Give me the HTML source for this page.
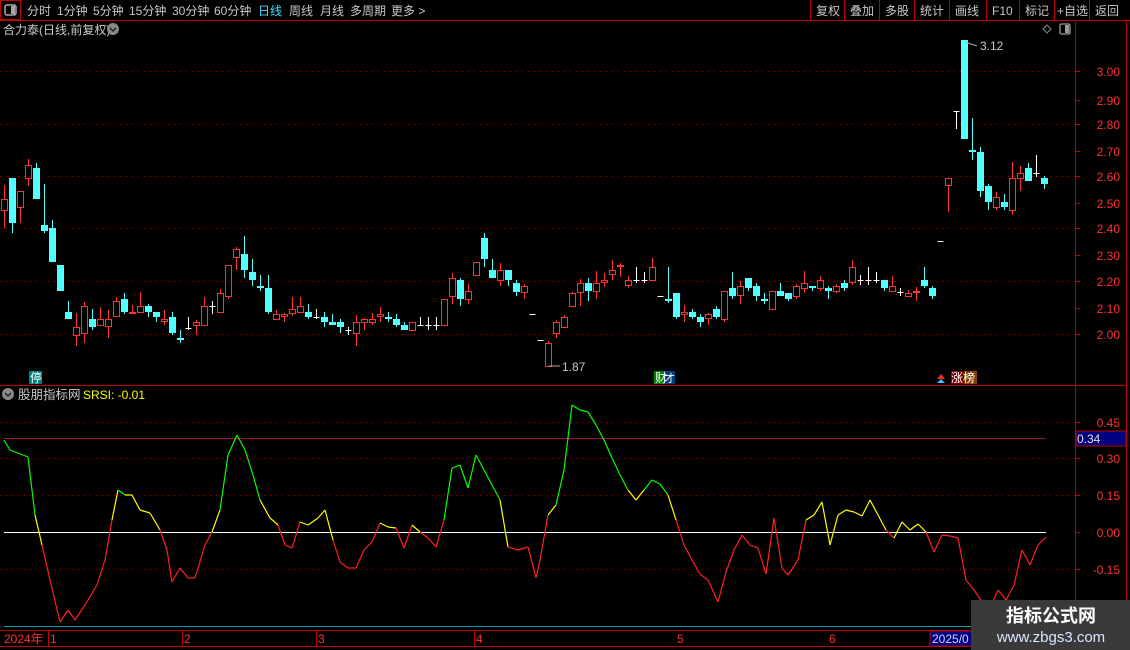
<!DOCTYPE html>
<html><head><meta charset="utf-8"><style>
html,body{margin:0;padding:0;background:#000;width:1130px;height:650px;overflow:hidden;font-family:"Liberation Sans","Noto Sans CJK SC",sans-serif;}
</style></head><body>
<svg id="s" width="1130" height="650" style="position:absolute;left:0;top:0" xmlns="http://www.w3.org/2000/svg" font-family="Liberation Sans, Noto Sans CJK SC, sans-serif">
<rect x="0.5" y="0.5" width="20" height="19" fill="none" stroke="#c00000"/>
<rect x="5" y="5" width="11" height="10" rx="2" fill="none" stroke="#aaa" stroke-width="1.5"/>
<rect x="11" y="6" width="4" height="8" fill="#aaa"/>
<line x1="0" y1="20.5" x2="1130" y2="20.5" stroke="#c00000"/>
<g fill="#c8c8c8" font-size="12">
<text x="27" y="15">分时</text><text x="57" y="15">1分钟</text><text x="93" y="15">5分钟</text><text x="129" y="15">15分钟</text><text x="172" y="15">30分钟</text><text x="214" y="15">60分钟</text>
<text x="258" y="15" fill="#40e0ff">日线</text><text x="289" y="15">周线</text><text x="320" y="15">月线</text><text x="350" y="15">多周期</text><text x="391" y="15">更多 &gt;</text>
<text x="816" y="15">复权</text><text x="850" y="15">叠加</text><text x="885" y="15">多股</text><text x="920" y="15">统计</text><text x="955" y="15">画线</text><text x="992" y="15">F10</text><text x="1025" y="15">标记</text><text x="1057" y="15">+自选</text><text x="1095" y="15">返回</text>
</g>
<g stroke="#c00000"><line x1="810.5" y1="0" x2="810.5" y2="20"/><line x1="844.5" y1="0" x2="844.5" y2="20"/><line x1="879.5" y1="0" x2="879.5" y2="20"/><line x1="914.5" y1="0" x2="914.5" y2="20"/><line x1="949.5" y1="0" x2="949.5" y2="20"/><line x1="986.5" y1="0" x2="986.5" y2="20"/><line x1="1019.5" y1="0" x2="1019.5" y2="20"/><line x1="1054.5" y1="0" x2="1054.5" y2="20"/><line x1="1089.5" y1="0" x2="1089.5" y2="20"/></g>
<text x="3" y="34" fill="#c8c8c8" font-size="12">合力泰(日线,前复权)</text>
<circle cx="113" cy="29" r="6" fill="#888"/><path d="M110 28 L113 31 L116 28" stroke="#222" stroke-width="1.5" fill="none"/>
<path d="M1047 25 L1051 29 L1047 33 L1043 29 Z" fill="none" stroke="#888"/>
<rect x="1060" y="24" width="10" height="10" rx="1.5" fill="none" stroke="#999" stroke-width="1.3"/><rect x="1065" y="25" width="4" height="8" fill="#999"/>
<line x1="1075.5" y1="20" x2="1075.5" y2="646" stroke="#c00000"/>
<line x1="1126.5" y1="20" x2="1126.5" y2="646" stroke="#c00000"/>
<line x1="0" y1="385.5" x2="1126" y2="385.5" stroke="#c00000"/>
<g id="grid"></g>
<g id="cand"></g>
<g id="ind"></g>
<g fill="#ff3030" font-size="12" text-anchor="end">
<text x="1120" y="76">3.00</text><text x="1120" y="105">2.90</text><text x="1120" y="129">2.80</text><text x="1120" y="156">2.70</text><text x="1120" y="181">2.60</text><text x="1120" y="208">2.50</text><text x="1120" y="233">2.40</text><text x="1120" y="260">2.30</text><text x="1120" y="286">2.20</text><text x="1120" y="313">2.10</text><text x="1120" y="339">2.00</text>
<text x="1120" y="427">0.45</text><text x="1120" y="463">0.30</text><text x="1120" y="500">0.15</text><text x="1120" y="537">0.00</text><text x="1120" y="574">-0.15</text>
</g>
<rect x="1076" y="431" width="50" height="15" fill="#000080" stroke="#c00000"/>
<text x="1077" y="443" fill="#e0e0e0" font-size="12">0.34</text>
<text x="980" y="50" fill="#c8c8c8" font-size="12">3.12</text><path d="M965 42 L977 46" stroke="#aaa"/>
<text x="562" y="371" fill="#c8c8c8" font-size="12">1.87</text><path d="M549 366 L560 366" stroke="#aaa"/>
<rect x="29" y="371" width="13" height="13" fill="#008080"/><text x="30" y="382" fill="#fff" font-size="12">停</text>
<rect x="654" y="371" width="10" height="13" fill="#008000"/><rect x="664" y="371" width="11" height="13" fill="#004080"/><text x="655" y="382" fill="#fff" font-size="12">财</text><text x="664" y="382" fill="#fff" font-size="11">才</text>
<path d="M937 379 L941 374 L945 379 Z" fill="#ff2020"/><path d="M937 383 L941 379 L945 383 Z" fill="#40c0ff"/>
<rect x="951" y="371" width="13" height="13" fill="#800000"/><rect x="964" y="371" width="13" height="13" fill="#804000"/><text x="951" y="382" fill="#fff" font-size="12">涨榜</text>
<circle cx="8" cy="394" r="6" fill="#888"/><path d="M5 393 L8 396 L11 393" stroke="#222" stroke-width="1.5" fill="none"/>
<text x="18" y="399" fill="#c8c8c8" font-size="12.5">股朋指标网</text>
<text x="83" y="399" fill="#ffff00" font-size="12">SRSI: -0.01</text>
<line x1="4" y1="626.5" x2="1075" y2="626.5" stroke="#00a0a0"/>
<line x1="0" y1="630.5" x2="1126" y2="630.5" stroke="#c00000"/>
<line x1="0" y1="646.5" x2="1126" y2="646.5" stroke="#c00000"/>
<g stroke="#c00000"><line x1="48.5" y1="630" x2="48.5" y2="646"/><line x1="182.5" y1="630" x2="182.5" y2="646"/><line x1="316.5" y1="630" x2="316.5" y2="646"/><line x1="474.5" y1="630" x2="474.5" y2="646"/></g>
<g fill="#ff3030" font-size="12"><text x="4" y="643">2024年</text><text x="50" y="643">1</text><text x="184" y="643">2</text><text x="318" y="643">3</text><text x="476" y="643">4</text><text x="677" y="643">5</text><text x="829" y="643">6</text></g>
<rect x="930" y="631" width="45" height="15" fill="#000080" stroke="#c00000"/><text x="932" y="643" fill="#d0d0ff" font-size="12">2025/0</text>
<rect x="971" y="600" width="159" height="50" fill="#3a3a3a"/>
<text x="1051" y="622" fill="#fff" font-size="18" font-weight="bold" text-anchor="middle">指标公式网</text>
<text x="1051" y="642" fill="#d8e8ff" font-size="15" text-anchor="middle">www.zbgs3.com</text>
</svg>
<script>
var NS="http://www.w3.org/2000/svg";
function el(p,t,a){var e=document.createElementNS(NS,t);for(var k in a)e.setAttribute(k,a[k]);p.appendChild(e);return e;}
var g=document.getElementById('grid');
[71,124,176,228,281,334,422,458,495,569].forEach(function(y){el(g,'line',{x1:0,y1:y+.5,x2:1075,y2:y+.5,stroke:'#a00000','stroke-dasharray':'1 5'});});
[71,100,124,151,176,203,228,255,281,308,334,422,458,495,532,569,605].forEach(function(y){el(g,'line',{x1:1075,y1:y+.5,x2:1080,y2:y+.5,stroke:'#c00000'});});
el(g,'line',{x1:4,y1:438.5,x2:1046,y2:438.5,stroke:'#a0104a'});
el(g,'line',{x1:4,y1:532.5,x2:1046,y2:532.5,stroke:'#ffffff'});
var C=[[199,211,185,228,'r'],[178,223,178,233,'c'],[191,208,191,223,'r'],[165,179,159,186,'r'],[168,199,163,199,'c'],[225,231,184,233,'c'],[228,262,220,262,'c'],[265,291,265,291,'c'],[312,319,301,319,'c'],[327,336,313,346,'r'],[306,334,302,343,'r'],[319,327,309,330,'c'],[319,326,307,326,'r'],[319,327,310,338,'r'],[301,317,297,317,'r'],[299,312,293,314,'c'],[312,314,305,314,'r'],[306,313,292,313,'r'],[306,312,304,317,'c'],[312,317,312,322,'c'],[319,322,310,325,'r'],[317,333,312,335,'c'],[338,340,330,343,'c'],[328,328,317,330,'w'],[322,326,320,335,'r'],[306,326,297,326,'r'],[306,306,301,314,'w'],[293,313,289,313,'r'],[265,297,265,299,'r'],[249,258,247,270,'r'],[254,270,236,278,'c'],[272,280,259,286,'c'],[286,288,275,291,'c'],[288,312,275,314,'c'],[314,320,310,320,'r'],[314,317,313,322,'r'],[309,314,297,316,'r'],[306,313,297,313,'r'],[312,317,304,319,'c'],[317,317,309,319,'w'],[317,322,312,327,'c'],[322,325,314,325,'c'],[322,327,319,333,'c'],[330,330,327,335,'w'],[322,334,315,346,'r'],[319,323,318,330,'r'],[319,323,313,325,'r'],[314,317,307,322,'r'],[317,319,312,322,'c'],[319,325,314,327,'c'],[325,330,322,330,'c'],[322,331,322,331,'r'],[325,325,317,326,'w'],[325,325,317,330,'w'],[325,325,317,330,'w'],[299,326,299,326,'r'],[278,297,273,304,'r'],[280,299,278,306,'c'],[291,300,284,304,'r'],[262,276,262,276,'r'],[238,259,233,267,'c'],[270,278,259,278,'c'],[270,281,263,286,'r'],[270,280,270,286,'c'],[283,292,280,296,'c'],[286,293,284,299,'r'],[314,314,314,314,'d'],[340,340,340,340,'d'],[343,367,341,367,'r'],[322,334,320,338,'r'],[317,328,315,328,'r'],[293,307,292,307,'r'],[283,293,279,306,'r'],[283,291,278,301,'c'],[283,292,271,299,'r'],[280,283,273,287,'r'],[270,275,260,280,'r'],[265,267,263,277,'r'],[280,286,276,288,'r'],[280,280,267,283,'w'],[280,280,272,283,'w'],[267,281,258,281,'r'],[296,296,296,296,'d'],[299,301,267,303,'c'],[293,317,293,319,'c'],[312,315,305,322,'r'],[312,317,309,319,'c'],[317,322,314,327,'c'],[314,319,313,325,'r'],[309,317,306,319,'c'],[291,320,291,322,'r'],[288,296,272,299,'c'],[286,296,281,304,'r'],[278,288,278,291,'c'],[286,296,283,301,'c'],[299,301,293,304,'c'],[291,310,291,310,'r'],[291,296,283,296,'c'],[293,299,293,301,'c'],[286,297,284,299,'r'],[283,289,271,293,'r'],[286,288,286,291,'c'],[280,289,276,291,'r'],[288,291,286,299,'c'],[286,292,284,293,'r'],[283,288,280,291,'c'],[267,283,260,285,'r'],[280,280,275,285,'w'],[280,280,267,285,'w'],[280,280,272,283,'w'],[280,288,280,291,'c'],[286,292,276,292,'r'],[292,292,288,296,'w'],[293,297,290,297,'r'],[291,293,287,301,'r'],[280,286,267,288,'c'],[288,296,286,299,'c'],[241,241,241,241,'d'],[178,186,178,212,'r'],[111,111,111,129,'t'],[40,139,40,139,'c'],[150,151,118,160,'c'],[152,191,147,197,'c'],[186,202,184,210,'c'],[197,208,192,210,'r'],[202,207,194,210,'c'],[178,211,162,215,'r'],[173,179,166,191,'r'],[168,181,163,181,'c'],[173,173,155,177,'w'],[178,184,176,189,'c']];
var cg=document.getElementById('cand');
C.forEach(function(c,i){var x=4.5+8*i,t=c[0],b=c[1],h=c[2],l=c[3],k=c[4];
 if(k=='w'||k=='t'){el(cg,'line',{x1:x,y1:h,x2:x,y2:l,stroke:'#fff'});el(cg,'line',{x1:x-3,y1:t+.5,x2:x+3,y2:t+.5,stroke:'#fff'});return;}
 if(k=='d'){el(cg,'line',{x1:x-3,y1:t+.5,x2:x+3,y2:t+.5,stroke:'#fff'});return;}
 if(k=='c'){el(cg,'line',{x1:x,y1:h,x2:x,y2:l,stroke:'#54ffff'});el(cg,'rect',{x:x-3.5,y:t,width:7,height:Math.max(b-t,2),fill:'#54ffff'});}
 else{el(cg,'line',{x1:x,y1:h,x2:x,y2:t,stroke:'#ff3232'});el(cg,'line',{x1:x,y1:b,x2:x,y2:l,stroke:'#ff3232'});el(cg,'rect',{x:x-3,y:t+.5,width:6,height:Math.max(b-t-1,1),fill:'none',stroke:'#ff3232'});}
});
var P=[[4,440],[10,450],[28,457],[35,515],[42,545],[50,580],[60,622],[68,610],[75,620],[85,605],[97,585],[105,560],[112,520],[118,490],[125,495],[132,495],[140,510],[150,513],[160,530],[167,550],[172,582],[180,568],[188,578],[195,578],[205,545],[212,532],[220,510],[228,455],[237,435],[245,450],[253,475],[260,500],[270,518],[278,525],[285,545],[292,548],[300,522],[308,525],[318,518],[325,510],[333,540],[340,562],[348,568],[356,568],[364,550],[372,542],[380,523],[388,527],[396,528],[404,548],[412,525],[420,532],[428,538],[436,547],[444,520],[452,468],[460,465],[468,488],[476,455],[484,470],[492,485],[500,500],[508,547],[518,550],[528,547],[536,578],[540,560],[548,515],[556,505],[564,470],[572,405],[580,410],[588,412],[596,425],[604,440],[612,458],[620,475],[628,490],[636,500],[644,490],[652,480],[660,484],[668,495],[676,520],[684,545],[692,560],[700,574],[708,580],[718,602],[726,572],[734,550],[742,535],[750,545],[758,548],[766,574],[774,518],[782,568],[788,575],[798,560],[806,520],[814,515],[822,502],[830,545],[838,515],[846,510],[854,512],[862,516],[870,500],[878,515],[886,530],[894,538],[902,522],[910,530],[918,524],[926,532],[934,552],[942,535],[950,536],[958,538],[966,580],[974,590],[982,602],[990,608],[998,590],[1006,600],[1014,585],[1022,550],[1030,565],[1038,545],[1046,537]];
var ig=document.getElementById('ind');
for(var i=1;i<P.length;i++){var a=P[i-1],b=P[i],m=(a[1]+b[1])/2;var col=m<495?'#00ff00':(m<=532?'#ffff00':'#ff2020');
 el(ig,'line',{x1:a[0],y1:a[1],x2:b[0],y2:b[1],stroke:col,'stroke-width':1.2});}
</script>
</body></html>
